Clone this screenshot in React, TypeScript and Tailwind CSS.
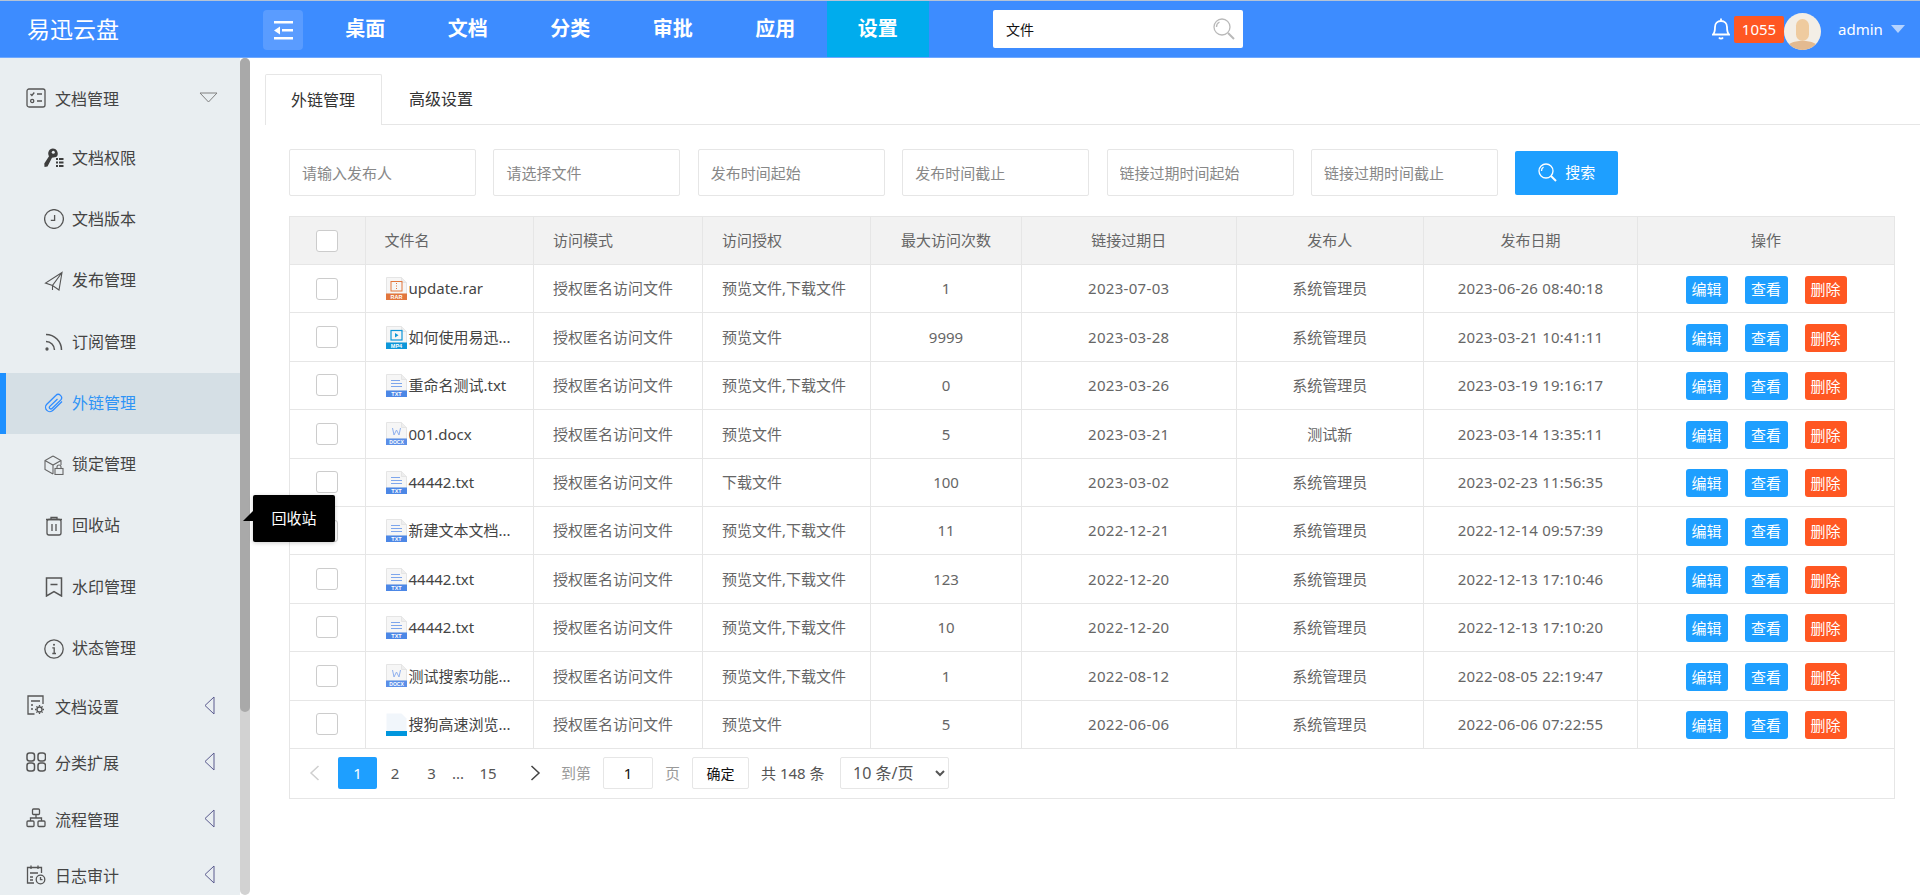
import type { ReactNode } from 'react';

const FONT = "font-['Noto_Sans','Noto_Sans_CJK_SC',sans-serif]";

const Ico = ({ children, className = '' }: { children: ReactNode; className?: string }) => (
  <svg
    width="20"
    height="20"
    viewBox="0 0 20 20"
    fill="none"
    stroke="#555"
    strokeWidth="1.3"
    className={`shrink-0 ${className}`}
  >
    {children}
  </svg>
);

const icons: Record<string, ReactNode> = {
  list: (
    <Ico className="-mt-1">
      <rect x="1" y="1" width="18" height="18" rx="2" />
      <path d="M4.500 6l1.400 1.500 2.400-3M11 6h5M11 13h5" />
      <circle cx="6.200" cy="13" r="1.600" />
    </Ico>
  ),
  key: (
    <Ico>
      <path
        d="M8.800 0.500a5 5 0 0 1 3.400 8.600L8 9.700 3.500 18.500 0.500 19 0.300 15.500 5 8.200A5 5 0 0 1 8.800 0.500z"
        fill="#3d3d3d"
        stroke="none"
      />
      <circle cx="9.300" cy="4.300" r="1.500" fill="#e9eef1" stroke="none" />
      <path d="M12 11h2M15 11h4.500M12 14.500h2M15 14.500h4.500M12 18h2M15 18h4.500" strokeWidth="2.200" stroke="#3d3d3d" />
    </Ico>
  ),
  clock: (
    <Ico>
      <circle cx="10" cy="10" r="9.400" />
      <path d="M10.600 6v5.300H6.800" />
    </Ico>
  ),
  send: (
    <Ico>
      <path d="M18 1.500L1.500 12l7 2.500 6.500 4.500 3-17.500zM18 1.500L8.500 14.500V19" strokeWidth="1.100" />
    </Ico>
  ),
  rss: (
    <Ico>
      <circle cx="3" cy="17" r="1" fill="#555" />
      <path d="M2 9.500a8.500 8.500 0 0 1 8.500 8.500M2 2.500A15.500 15.500 0 0 1 17.500 18" strokeWidth="1.500" />
    </Ico>
  ),
  clip: (
    <Ico>
      <path
        d="M18 8.500L9 17.300a4.300 4.300 0 0 1-6.200-6L11.800 2.500a3.300 3.300 0 0 1 4.800 4.600L8 15.500a1.500 1.500 0 0 1-2.200-2.100L13.500 6"
        stroke="#2f8cff"
      />
    </Ico>
  ),
  lock: (
    <Ico>
      <path d="M9 1l8 4.500V10M9 1L1 5.500v9L9 19M1 5.500L9 10l8-4.500M9 10v9" stroke="#666" strokeWidth="1.100" />
      <rect x="11" y="13.500" width="8" height="6" stroke="#666" strokeWidth="1.100" />
      <path d="M13 13.500v-1.500a2 2 0 0 1 4 0v1.500" stroke="#666" strokeWidth="1.100" />
    </Ico>
  ),
  trash: (
    <Ico>
      <path d="M2 3.500h16M7 3.500V1.500h6v2" />
      <rect x="3" y="3.500" width="14" height="15.500" rx="2" />
      <path d="M8 8v7M12 8v7" />
    </Ico>
  ),
  mark: (
    <Ico>
      <path d="M2.500 1h15v18l-7.500-4.500L2.500 19zM6.500 7.500h7" strokeWidth="1.500" />
    </Ico>
  ),
  info: (
    <Ico>
      <circle cx="10" cy="10" r="9.200" />
      <circle cx="10" cy="5.700" r="1" fill="#555" stroke="none" />
      <path d="M8.300 8.800H10.200V14.500M8.300 14.500H12" />
    </Ico>
  ),
  gear: (
    <Ico className="-mt-1">
      <path d="M17 9V1H2v18h6.500M5 6h9M5 10h2M5 14h2" />
      <circle cx="13.500" cy="14.500" r="2.500" />
      <path d="M13.500 10v1.500M13.500 17.500V19M9 14.500h1.500M16.500 14.500H18M10.400 11.400l1 1M15.600 16.600l1 1M10.400 17.600l1-1M15.600 12.400l1-1" />
    </Ico>
  ),
  grid: (
    <Ico className="-mt-1">
      <rect x="1" y="1" width="7.500" height="8" rx="2.500" strokeWidth="1.500" />
      <rect x="12" y="1" width="7.500" height="8" rx="2.500" strokeWidth="1.500" />
      <rect x="1" y="11" width="7.500" height="8" rx="2.500" strokeWidth="1.500" />
      <rect x="12" y="11" width="7.500" height="8" rx="2.500" strokeWidth="1.500" />
    </Ico>
  ),
  org: (
    <Ico className="-mt-1">
      <rect x="6.500" y="1" width="7" height="5.500" rx="1" />
      <rect x="1" y="13" width="7" height="5.500" rx="1" />
      <rect x="12" y="13" width="7" height="5.500" rx="1" />
      <path d="M10 6.500v3.500M4.500 13v-3h11v3" />
    </Ico>
  ),
  log: (
    <Ico className="-mt-1">
      <path d="M8 18H1.500V2.500h14V8M5 .5v3.500M12 .5v3.500M4 8h8M4 12h3M4 15h3" />
      <circle cx="14.500" cy="14.500" r="4.300" />
      <path d="M14.500 12v2.700h2" />
    </Ico>
  ),
};

const subItems = [
  { key: 'key', label: '文档权限' },
  { key: 'clock', label: '文档版本' },
  { key: 'send', label: '发布管理' },
  { key: 'rss', label: '订阅管理' },
  { key: 'clip', label: '外链管理', active: true },
  { key: 'lock', label: '锁定管理' },
  { key: 'trash', label: '回收站' },
  { key: 'mark', label: '水印管理' },
  { key: 'info', label: '状态管理' },
];

const groups = [
  { key: 'gear', label: '文档设置' },
  { key: 'grid', label: '分类扩展' },
  { key: 'org', label: '流程管理' },
  { key: 'log', label: '日志审计' },
];

const nav = ['桌面', '文档', '分类', '审批', '应用', '设置'];
const filters = ['请输入发布人', '请选择文件', '发布时间起始', '发布时间截止', '链接过期时间起始', '链接过期时间截止'];

const rows = [
  { type: 'RAR', name: 'update.rar', auth: '预览文件,下载文件', max: '1', expire: '2023-07-03', user: '系统管理员', date: '2023-06-26 08:40:18' },
  { type: 'MP4', name: '如何使用易迅...', auth: '预览文件', max: '9999', expire: '2023-03-28', user: '系统管理员', date: '2023-03-21 10:41:11' },
  { type: 'TXT', name: '重命名测试.txt', auth: '预览文件,下载文件', max: '0', expire: '2023-03-26', user: '系统管理员', date: '2023-03-19 19:16:17' },
  { type: 'DOCX', name: '001.docx', auth: '预览文件', max: '5', expire: '2023-03-21', user: '测试新', date: '2023-03-14 13:35:11' },
  { type: 'TXT', name: '44442.txt', auth: '下载文件', max: '100', expire: '2023-03-02', user: '系统管理员', date: '2023-02-23 11:56:35' },
  { type: 'TXT', name: '新建文本文档...', auth: '预览文件,下载文件', max: '11', expire: '2022-12-21', user: '系统管理员', date: '2022-12-14 09:57:39' },
  { type: 'TXT', name: '44442.txt', auth: '预览文件,下载文件', max: '123', expire: '2022-12-20', user: '系统管理员', date: '2022-12-13 17:10:46' },
  { type: 'TXT', name: '44442.txt', auth: '预览文件,下载文件', max: '10', expire: '2022-12-20', user: '系统管理员', date: '2022-12-13 17:10:20' },
  { type: 'DOCX', name: '测试搜索功能...', auth: '预览文件,下载文件', max: '1', expire: '2022-08-12', user: '系统管理员', date: '2022-08-05 22:19:47' },
  { type: 'EXE', name: '搜狗高速浏览...', auth: '预览文件', max: '5', expire: '2022-06-06', user: '系统管理员', date: '2022-06-06 07:22:55' },
];

const COLS = 'grid grid-cols-[75.5px_168.5px_169px_168px_151px_214.5px_187.5px_214px_1fr]';
const CELL = 'flex items-center border-r border-[#e6e6e6] min-w-0';

function FileIcon({ type }: { type: string }) {
  const color: Record<string, string> = { RAR: '#e2763c', MP4: '#0e97d9', TXT: '#4c87e6', DOCX: '#5b8fe8', EXE: '#0096dd' };
  const c = color[type];
  if (type === 'EXE') {
    return (
      <svg width="21" height="23" viewBox="0 0 21 23" className="shrink-0">
        <path d="M.5.500h15l5 5V18H.500z" fill="#f1f6fb" />
        <rect y="18" width="21" height="5" fill={c} />
      </svg>
    );
  }
  return (
    <svg width="21" height="23" viewBox="0 0 21 23" className="shrink-0">
      <path d="M.5.500h15l5 5V17H.500z" fill="#f6f6f6" stroke="#e5e5e5" />
      <path d="M15.500.500v5h5" fill="#eee" stroke="#e5e5e5" />
      <rect y="16.500" width="21" height="6.500" fill={c} />
      <text x="10.500" y="22" textAnchor="middle" fontSize={type === 'DOCX' ? 5 : 5.500} fontWeight="700" fill="#fff" fontFamily="Liberation Sans, sans-serif">
        {type}
      </text>
      {type === 'RAR' && (
        <>
          <rect x="5" y="4.500" width="11" height="9.500" fill="none" stroke={c} strokeWidth="1" />
          <path d="M10.500 6v1M10.500 8.500v1M10.500 11v1" stroke={c} strokeWidth="1" />
        </>
      )}
      {type === 'MP4' && (
        <>
          <rect x="5" y="4.500" width="11" height="9.500" fill="none" stroke={c} strokeWidth="1.200" />
          <path d="M9 7l3.500 2.200L9 11.500z" fill={c} />
        </>
      )}
      {type === 'TXT' && <path d="M5 6.500h9M5 9.500h11M5 12.500h11" stroke="#7ea6ec" strokeWidth="1" />}
      {type === 'DOCX' && <path d="M6.500 6l1.500 7 2.500-5 2.500 5 1.500-7" fill="none" stroke="#8fb0ee" strokeWidth="1" />}
    </svg>
  );
}

function Sidebar() {
  return (
    <aside className="w-[240px] shrink-0 overflow-hidden bg-[#e9eef1] pt-[14px] text-[16px] text-[#444]">
      <div className="flex h-[55.5px] items-center pl-[26px]">
        {icons.list}
        <span className="ml-[9px] -mt-px">文档管理</span>
        <svg width="19" height="11" viewBox="0 0 19 11" className="ml-auto mr-[22px] -mt-1">
          <path d="M1 1h17l-8.500 9z" fill="none" stroke="#808080" />
        </svg>
      </div>
      {subItems.map((item) => (
        <div
          key={item.label}
          className={`flex h-[61.3px] items-center ${
            item.active
              ? 'border-l-[6px] border-[#1e90ff] bg-[#d5dfe5] pl-[38px] text-[#2f94f5]'
              : 'pl-[44px]'
          }`}
        >
          {icons[item.key]}
          <span className="ml-2 -mt-px">{item.label}</span>
        </div>
      ))}
      {groups.map((g) => (
        <div key={g.label} className="flex h-[56.5px] items-center pl-[26px]">
          {icons[g.key]}
          <span className="ml-[9px] -mt-px">{g.label}</span>
          <svg width="11" height="19" viewBox="0 0 11 19" className="ml-auto mr-[25px] -mt-1">
            <path d="M10 1v17L1 9.500z" fill="none" stroke="#5a5a8e" />
          </svg>
        </div>
      ))}
    </aside>
  );
}

function Pagination() {
  return (
    <div className="flex h-[50px] items-center border-x border-b border-[#e6e6e6] text-[15px] text-[#555]">
      <svg width="11" height="16" viewBox="0 0 11 16" className="ml-[19px]">
        <path d="M9.500 1L2 8l7.500 7" fill="none" stroke="#cfcfcf" strokeWidth="1.500" />
      </svg>
      <span className="ml-[18px] flex h-8 w-[39px] items-center justify-center rounded-[2px] bg-[#1e9fff] text-white">1</span>
      <span className="w-[36px] text-center">2</span>
      <span className="w-[37px] text-center">3</span>
      <span className="w-[16px] text-center leading-none">...</span>
      <span className="w-[44px] text-center">15</span>
      <svg width="11" height="16" viewBox="0 0 11 16" className="ml-[20px]">
        <path d="M1.500 1L9 8l-7.500 7" fill="none" stroke="#444" strokeWidth="1.500" />
      </svg>
      <span className="ml-[20px] text-[#999]">到第</span>
      <input
        readOnly
        value="1"
        className="ml-[12px] h-8 w-[50px] rounded-[2px] border border-[#e6e6e6] text-center text-[#111] outline-none"
      />
      <span className="ml-[12px] text-[#999]">页</span>
      <button className="ml-[12px] h-8 w-[57px] rounded-[2px] border border-[#e6e6e6] text-[14px] text-[#111]">确定</button>
      <span className="ml-[12px] w-[65px] whitespace-nowrap">共 148 条</span>
      <select className="ml-[14px] h-8 w-[109px] rounded-[2px] border border-[#e6e6e6] bg-white pl-2 text-[16px] text-[#555] outline-none">
        <option>10 条/页</option>
      </select>
    </div>
  );
}

function DocTable() {
  return (
    <div className="mt-[20px] text-[15px] text-[#666]">
      <div className={`${COLS} h-[49px] border-x border-y border-[#e6e6e6] bg-[#f2f2f2]`}>
        <div className={`${CELL} justify-center`}>
          <span className="h-[22px] w-[22px] rounded-[3px] border border-[#ccc] bg-white" />
        </div>
        <div className={`${CELL} pl-[19px]`}>文件名</div>
        <div className={`${CELL} pl-[19px]`}>访问模式</div>
        <div className={`${CELL} pl-[19px]`}>访问授权</div>
        <div className={`${CELL} justify-center`}>最大访问次数</div>
        <div className={`${CELL} justify-center`}>链接过期日</div>
        <div className={`${CELL} justify-center`}>发布人</div>
        <div className={`${CELL} justify-center`}>发布日期</div>
        <div className="flex items-center justify-center">操作</div>
      </div>
      {rows.map((r, i) => (
        <div key={i} className={`${COLS} h-[48.4px] border-x border-b border-[#e6e6e6]`}>
          <div className={`${CELL} justify-center`}>
            <span className="h-[22px] w-[22px] rounded-[3px] border border-[#ccc] bg-white" />
          </div>
          <div className={`${CELL} pl-[20px] text-[#444]`}>
            <FileIcon type={r.type} />
            <span className="ml-[2px] whitespace-nowrap">{r.name}</span>
          </div>
          <div className={`${CELL} pl-[19px]`}>授权匿名访问文件</div>
          <div className={`${CELL} pl-[19px]`}>{r.auth}</div>
          <div className={`${CELL} justify-center`}>{r.max}</div>
          <div className={`${CELL} justify-center tracking-[0.3px]`}>{r.expire}</div>
          <div className={`${CELL} justify-center`}>{r.user}</div>
          <div className={`${CELL} justify-center tracking-[0.2px]`}>{r.date}</div>
          <div className="flex items-center justify-center gap-[17px] pt-[2px] text-white">
            <span className="flex h-[28px] w-[42px] items-center justify-center rounded-[3px] bg-[#1e9fff]">编辑</span>
            <span className="flex h-[28px] w-[43px] items-center justify-center rounded-[3px] bg-[#1e9fff]">查看</span>
            <span className="flex h-[28px] w-[42px] items-center justify-center rounded-[3px] bg-[#ff5722]">删除</span>
          </div>
        </div>
      ))}
      <Pagination />
    </div>
  );
}

export default function App() {
  return (
    <div className={`${FONT} relative flex h-[895px] w-full flex-col overflow-hidden bg-white`}>
      {/* 顶部导航 */}
      <header className="flex h-[58px] shrink-0 items-stretch border-y border-t-[#b5c3d6] border-b-[#6ea8ff] bg-[#3d8cff] text-white">
        <div className="flex w-[263px] items-center pl-[27px] text-[23px]">易迅云盘</div>
        <div className="mt-[9px] flex h-10 w-10 items-center justify-center rounded-[4px] bg-[#5a9cff]">
          <svg width="19" height="19" viewBox="0 0 19 19" fill="#fff">
            <rect y="0" width="19" height="2.500" />
            <rect x="8" y="8" width="11" height="2.500" />
            <rect y="16" width="19" height="2.500" />
            <path d="M6 5.500v8L0 9.500z" />
          </svg>
        </div>
        <nav className="ml-[11px] flex">
          {nav.map((n) => (
            <div
              key={n}
              className={`flex w-[102.5px] items-center justify-center text-[20px] font-bold ${n === '设置' ? 'bg-[#00aced]' : ''}`}
            >
              {n}
            </div>
          ))}
        </nav>
        <div className="ml-[64px] mt-[9px] flex h-[38px] w-[250px] items-center rounded-[2px] bg-white pl-[13px] pr-2">
          <input readOnly value="文件" className="min-w-0 flex-1 text-[14px] text-[#111] outline-none" />
          <svg width="22" height="22" viewBox="0 0 22 22" fill="none" stroke="#b9b9b9" strokeWidth="1.300">
            <circle cx="9" cy="9" r="8" />
            <path d="M15 15l6 6" strokeWidth="2" />
            <path d="M3.500 9a5.500 5.500 0 0 1 3-5" />
          </svg>
        </div>
        <div className="ml-auto flex items-center pr-[15px]">
          <svg width="18" height="23" viewBox="0 0 18 23" fill="none" stroke="#fff" strokeWidth="1.800" className="-mt-[2px]">
            <path d="M1 17.500c2-2 2-4 2-7.500 0-3.500 2.500-6 6-6s6 2.500 6 6c0 3.500 0 5.500 2 7.500zM9 4V1.500M7 20.500c1 1.500 3 1.500 4 0" />
          </svg>
          <span className="ml-[4px] flex h-[27px] w-[50px] items-center justify-center rounded-[2px] bg-[#ff5722] text-[15px]">1055</span>
          <svg width="37" height="37" viewBox="0 0 37 37" className="mt-[5px]">
            <defs>
              <clipPath id="av">
                <circle cx="18.500" cy="18.500" r="18.500" />
              </clipPath>
            </defs>
            <g clipPath="url(#av)">
              <rect width="37" height="37" fill="#f3eee6" />
              <path d="M2 37c1-7 7-9 16.500-9S34 30 35 37z" fill="#e3ba90" />
              <rect x="12" y="6" width="13" height="22" rx="6.500" fill="#efcb9f" />
            </g>
          </svg>
          <span className="ml-[17px] w-[46px] text-[15px]">admin</span>
          <svg width="14" height="8" viewBox="0 0 14 8" className="ml-[7px]">
            <path d="M0 0h14L7 8z" fill="#b5d3ff" />
          </svg>
        </div>
      </header>

      <div className="flex min-h-0 flex-1">
        <Sidebar />
        {/* 滚动条 */}
        <div className="w-[10px] shrink-0 rounded-[5px] bg-[#d2d2d2]">
          <div className="h-[654px] rounded-[5px] bg-[#a9a9a9]" />
        </div>

        <main className="min-w-0 flex-1 pl-[14.5px] pt-[16px]">
          {/* 标签页 */}
          <div className="flex h-[51px] items-stretch border-b border-[#e6e6e6] text-[16px] text-[#333]">
            <div className="-mb-px flex w-[117px] items-center justify-center rounded-t-[2px] border-x border-t border-[#e6e6e6] bg-white">
              外链管理
            </div>
            <div className="flex w-[119px] items-center justify-center">高级设置</div>
          </div>

          <div className="pl-[24.5px] pr-[25px]">
            {/* 筛选 */}
            <div className="mt-[24px] flex items-center gap-[17.4px]">
              {filters.map((f) => (
                <input
                  key={f}
                  readOnly
                  placeholder={f}
                  className="h-[47px] w-[187px] rounded-[2px] border border-[#e6e6e6] bg-white pl-[12px] text-[15px] outline-none placeholder:text-[#888]"
                />
              ))}
              <button className="flex h-[44px] w-[103px] items-center justify-center rounded-[2px] bg-[#1e9fff] text-[15px] text-white">
                <svg width="19" height="19" viewBox="0 0 19 19" fill="none" stroke="#fff" strokeWidth="1.300" className="mr-[8px]">
                  <circle cx="8" cy="8" r="7" />
                  <path d="M13 13l5 5" strokeWidth="2" />
                  <path d="M3.500 8a4.500 4.500 0 0 1 2-4" />
                </svg>
                搜索
              </button>
            </div>

            <DocTable />
          </div>
        </main>
      </div>

      {/* 提示框 */}
      <div className="absolute left-[253px] top-[495px] flex h-[47px] w-[82px] items-center justify-center rounded-[2px] bg-black text-[15px] text-white shadow-[0_1px_4px_rgba(0,0,0,0.2)]">
        回收站
        <span className="absolute -left-[10px] top-[16px] h-0 w-0 border-b-[10px] border-l-[10px] border-b-black border-l-transparent" />
      </div>
    </div>
  );
}
